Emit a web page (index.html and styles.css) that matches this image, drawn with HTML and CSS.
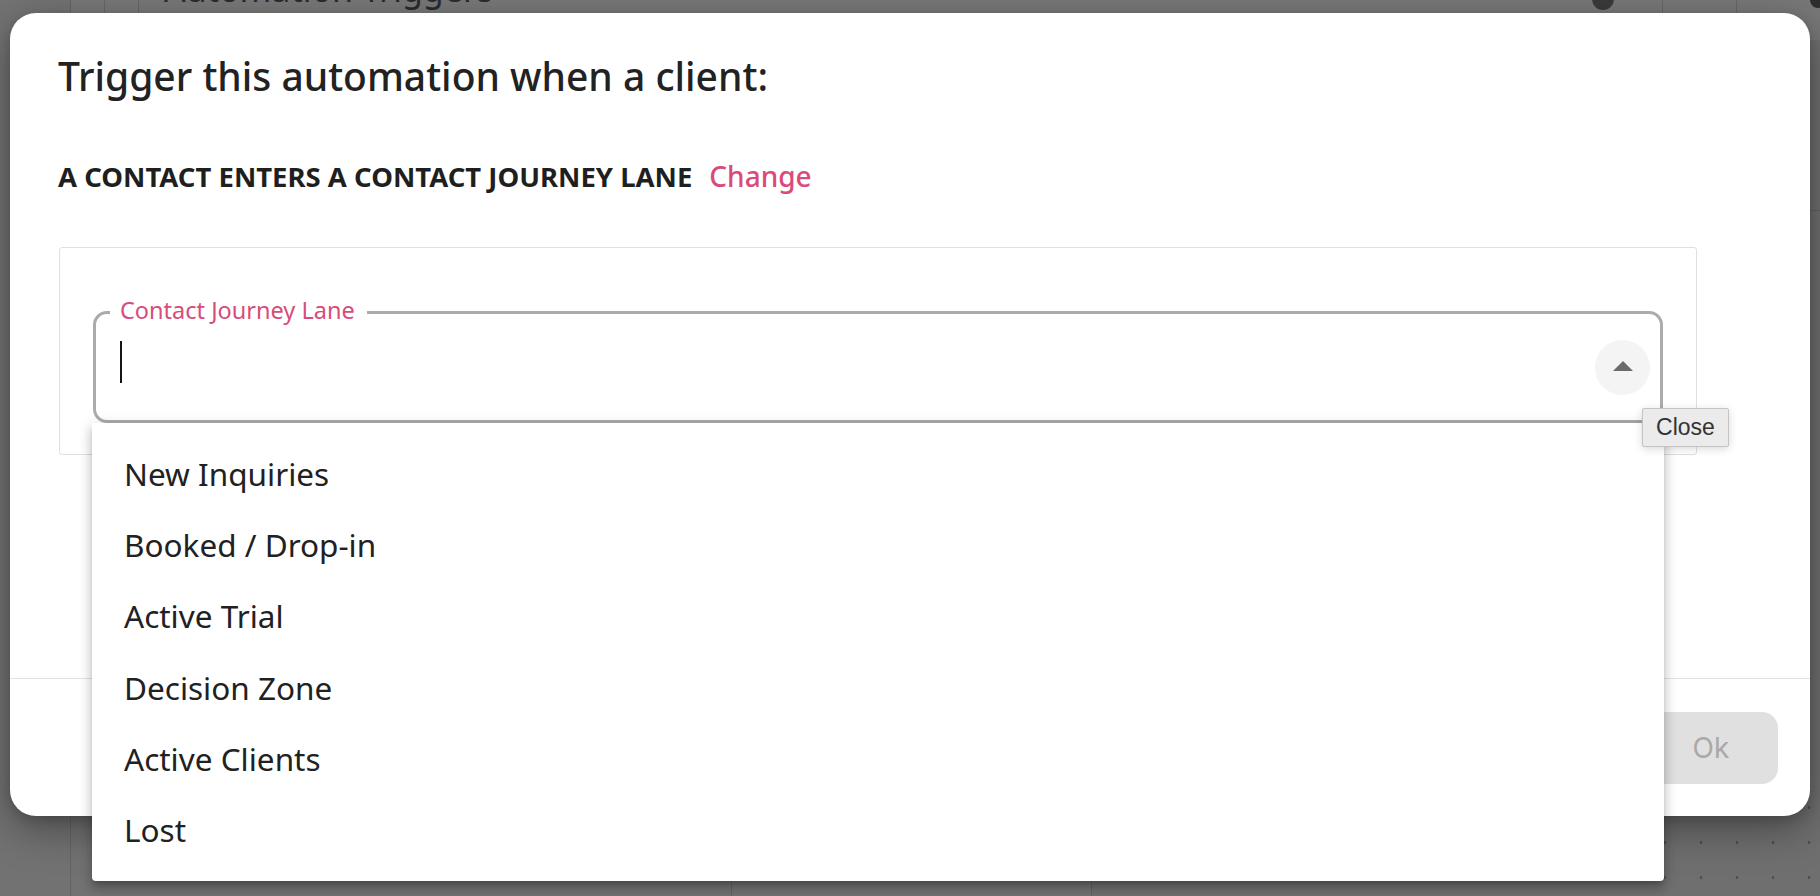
FILE: index.html
```html
<!DOCTYPE html>
<html lang="en">
  <head>
    <meta charset="utf-8" />
    <meta name="viewport" content="width=device-width, initial-scale=1.0" />
    <title>Automation Triggers</title>
    <link rel="stylesheet" href="styles.css">
  </head>
  <body>
    <div class="app">
      <aside class="rail"></aside>
      <div class="main">
        <header class="topbar">
          <div class="crumb"></div>
          <div class="crumb"></div>
          <h2 class="page-title">Automation Triggers</h2>
          <span class="avatar"></span>
          <div class="tool"></div>
          <div class="tool"></div>
          <span class="dot-btn"></span>
        </header>
        <div class="board">
          <div class="col col-wide"></div>
          <div class="col col-mid"></div>
          <div class="col canvas">
            <div class="canvas-head"></div>
          </div>
        </div>
      </div>
    </div>

    <div class="modal">
      <div class="modal-body">
        <h1 class="modal-title">Trigger this automation when a client:</h1>
        <div class="trigger-row">
          <span class="trigger-name">A contact enters a contact journey lane</span>
          <a class="change-link" href="#">Change</a>
        </div>
        <div class="lane-box">
          <div class="lane-field">
            <label class="lane-label">Contact Journey Lane</label>
            <span class="caret"></span>
            <button class="toggle-btn" title="Close">
              <svg width="20" height="10" viewBox="0 0 20 10"><polygon points="0,10 10,0 20,10" fill="#6b6b6b"/></svg>
            </button>
            <div class="tooltip">Close</div>
            <ul class="options">
              <li class="option">New Inquiries</li>
              <li class="option">Booked / Drop-in</li>
              <li class="option">Active Trial</li>
              <li class="option">Decision Zone</li>
              <li class="option">Active Clients</li>
              <li class="option">Lost</li>
            </ul>
          </div>
        </div>
      </div>
      <footer class="modal-footer">
        <button class="ok-button" disabled>Ok</button>
      </footer>
    </div>
  </body>
</html>
```

FILE: styles.css
```css
body,
html {
  margin: 0;
  padding: 0;
  height: 100%;
  overflow: hidden;
  font-family: "Noto Sans", "Open Sans", sans-serif;
  color: #222222;
  -webkit-font-smoothing: antialiased;
}

.app {
  display: flex;
  height: 100vh;
  background-color: #727272;
}

.rail {
  width: 70px;
  flex-shrink: 0;
  border-right: 1px solid #646464;
}

.main {
  flex: 1;
  display: flex;
  flex-direction: column;
}

.topbar {
  display: flex;
  align-items: flex-start;
  height: 40px;
  background-color: #777777;
}

.crumb {
  width: 33px;
  height: 100%;
  border-right: 1px solid #666666;
}

.page-title {
  margin: -31px 0 0 25px;
  font-size: 34px;
  font-weight: 400;
  line-height: 40px;
  color: #2b2b2b;
  flex: 1;
}

.avatar {
  width: 22px;
  height: 22px;
  margin-top: -12px;
  border-radius: 50%;
  background-color: #3a3a3a;
  margin-right: 48px;
}

.tool {
  width: 73px;
  height: 100%;
  border-left: 1px solid #666666;
}

.dot-btn {
  width: 16px;
  height: 16px;
  margin: -8px -6px 0 0;
  border-radius: 50%;
  background-color: #2e2e2e;
}

.board {
  flex: 1;
  display: flex;
}

.col {
  border-right: 1px solid #626262;
}

.col-wide {
  width: 660px;
}

.col-mid {
  width: 359px;
}

.canvas {
  flex: 1;
  border-right: none;
  background-color: #6f6f6f;
  background-image: radial-gradient(circle, #505050 1.2px, transparent 1.6px);
  background-size: 36px 35px;
  background-position: 15px 15px;
}

.canvas-head {
  height: 170px;
  border-bottom: 1px solid #616161;
}

/* modal */
.modal {
  position: absolute;
  left: 10px;
  top: 13px;
  width: 1800px;
  height: 803px;
  display: flex;
  flex-direction: column;
  background-color: #ffffff;
  border-radius: 26px;
  box-shadow: 0 14px 40px rgba(0, 0, 0, 0.35), 0 4px 12px rgba(0, 0, 0, 0.15);
}

.modal-body {
  height: 666px;
  box-sizing: border-box;
  padding: 39px 48px 0;
  border-bottom: 1px solid #e2e2e2;
}

.modal-title {
  margin: 0;
  font-size: 39px;
  font-weight: 500;
  line-height: 48px;
  color: #222222;
}

.trigger-row {
  display: flex;
  align-items: baseline;
  gap: 17px;
  margin-top: 60px;
  line-height: 32px;
}

.trigger-name {
  font-size: 27.5px;
  font-weight: 700;
  text-transform: uppercase;
  color: #1f1f1f;
}

.change-link {
  font-size: 28px;
  font-weight: 500;
  color: #d84c7b;
  text-decoration: none;
}

.lane-box {
  width: 1638px;
  box-sizing: border-box;
  margin: 54px 0 0 1px;
  padding: 63px 33px 31px;
  border: 1px solid #e0e0e0;
  border-radius: 3px;
}

.lane-field {
  position: relative;
  display: flex;
  align-items: center;
  height: 112px;
  box-sizing: border-box;
  padding: 0 10px 0 24px;
  border: 3px solid #ababab;
  border-radius: 14px;
}

.lane-label {
  position: absolute;
  left: 14px;
  top: -16px;
  padding: 0 12px 0 10px;
  background-color: #ffffff;
  font-size: 23.5px;
  line-height: 24px;
  color: #d84c7b;
}

.caret {
  width: 2px;
  height: 42px;
  margin-top: -11px;
  background-color: #151515;
}

.toggle-btn {
  display: flex;
  align-items: center;
  justify-content: center;
  width: 55px;
  height: 55px;
  margin-left: auto;
  padding: 0;
  border: none;
  border-radius: 50%;
  background-color: #f4f4f4;
  cursor: pointer;
}

.toggle-btn svg {
  margin-top: -3px;
}

.tooltip {
  position: absolute;
  left: 1546px;
  top: 94px;
  z-index: 3;
  width: 87px;
  height: 39px;
  box-sizing: border-box;
  border: 1px solid #c4c4c4;
  border-radius: 2px;
  background-color: #ebebeb;
  box-shadow: 0 2px 8px rgba(0, 0, 0, 0.15);
  font-family: "Liberation Sans", Arial, sans-serif;
  font-size: 23px;
  line-height: 37px;
  text-align: center;
  color: #333333;
}

.options {
  position: absolute;
  left: -4px;
  right: -4px;
  top: calc(100% + 3px);
  z-index: 2;
  margin: 0;
  padding: 15px 0 16px;
  list-style: none;
  background-color: #ffffff;
  border-radius: 0 0 4px 4px;
  box-shadow: 0 5px 5px -3px rgba(0, 0, 0, 0.2), 0 8px 10px 1px rgba(0, 0, 0, 0.14), 0 3px 14px 2px rgba(0, 0, 0, 0.12);
}

.option {
  padding-left: 32px;
  font-size: 31.5px;
  line-height: 71.2px;
  color: #212121;
}

.modal-footer {
  flex: 1;
  display: flex;
  justify-content: flex-end;
  align-items: center;
  padding: 0 32px;
}

.ok-button {
  width: 134px;
  height: 72px;
  border: none;
  border-radius: 16px;
  background-color: #e0e0e0;
  font-family: Inter, "Liberation Sans", sans-serif;
  font-size: 28px;
  color: #a9a9a9;
}
```
